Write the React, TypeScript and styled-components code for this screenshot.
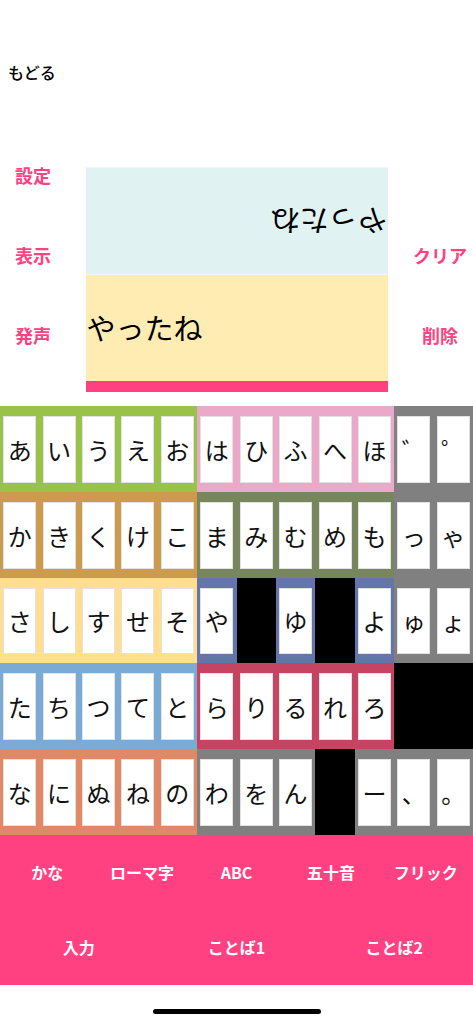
import React from "react";
import styled, { createGlobalStyle } from "styled-components";

const GlobalStyle = createGlobalStyle`
  body {
    margin: 0;
    background-color: #ffffff;
    font-family: "Noto Sans CJK JP", "Noto Sans", sans-serif;
  }
`;

const Page = styled.div`
  width: 473px;
  min-height: 1024px;
  margin: 0 auto;
  display: flex;
  flex-direction: column;
`;

const Header = styled.div`
  height: 135px;
  box-sizing: border-box;
  padding: 62px 0 0 8px;
`;

const BackLink = styled.div`
  font-size: 16px;
  line-height: 20px;
  font-weight: 500;
  color: #000000;
`;

const Middle = styled.div`
  display: grid;
  grid-template-columns: 66px 1fr 66px;
`;

const SideColumn = styled.div`
  display: flex;
  flex-direction: column;
`;

const SideLabel = styled.div`
  height: 80px;
  display: flex;
  align-items: center;
  justify-content: center;
  font-size: 18px;
  font-weight: bold;
  color: #ff4081;
`;

const Display = styled.div`
  width: 302px;
  justify-self: center;
  margin: 33px 0 14px;
  display: flex;
  flex-direction: column;
`;

const Panel = styled.div<{ $flipped?: boolean }>`
  height: 106.5px;
  display: flex;
  align-items: center;
  padding-left: 1px;
  background-color: ${(p) => (p.$flipped ? "#e0f2f1" : "#ffecb3")};
  transform: ${(p) => (p.$flipped ? "rotate(180deg)" : "none")};
`;

const DisplayText = styled.span`
  font-size: 29px;
  line-height: 1;
  color: #000000;
`;

const Bar = styled.div`
  height: 11px;
  background-color: #ff4081;
`;

const Keyboard = styled.div`
  display: grid;
  grid-template-columns: repeat(12, 1fr);
  grid-auto-rows: 85.8px;
`;

const Cell = styled.div<{ $bg: string }>`
  background-color: ${(p) => p.$bg};
  box-sizing: border-box;
  padding: 10px 3.2px 9px;
  display: flex;
`;

const Key = styled.div`
  flex: 1;
  background-color: #ffffff;
  border: 1px solid #e2e2e2;
  display: flex;
  align-items: center;
  justify-content: center;
  font-size: 24px;
  color: #111111;
`;

const ModeBar = styled.div`
  background-color: #ff4081;
  display: flex;
  flex-direction: column;
`;

const ModeRow = styled.div<{ $cols: number }>`
  height: 75px;
  display: grid;
  grid-template-columns: repeat(${(p) => p.$cols}, 1fr);
`;

const ModeButton = styled.div`
  display: flex;
  align-items: center;
  justify-content: center;
  color: #ffffff;
  font-size: 16px;
  font-weight: bold;
`;

const HomeArea = styled.div`
  height: 39px;
  display: flex;
  justify-content: center;
  padding-top: 24px;
  box-sizing: border-box;
`;

const HomeIndicator = styled.div`
  width: 168px;
  height: 5px;
  border-radius: 3px;
  background-color: #000000;
`;

const C = {
  green: "#98c249",
  pink: "#eaa9c9",
  gray: "#808080",
  brown: "#cd9b4e",
  olive: "#78865d",
  yellow: "#ffdf8f",
  slate: "#6375a9",
  sky: "#7aabd7",
  crimson: "#c54462",
  salmon: "#df8967",
  black: "#000000",
};

type KeyDef = [string | null, string];

const group = (chars: string, color: string): KeyDef[] =>
  Array.from(chars).map((ch) => [ch, color]);

const rows: KeyDef[][] = [
  [...group("あいうえお", C.green), ...group("はひふへほ", C.pink), ...group("゛゜", C.gray)],
  [...group("かきくけこ", C.brown), ...group("まみむめも", C.olive), ...group("っゃ", C.gray)],
  [
    ...group("さしすせそ", C.yellow),
    ["や", C.slate],
    [null, C.black],
    ["ゆ", C.slate],
    [null, C.black],
    ["よ", C.slate],
    ...group("ゅょ", C.gray),
  ],
  [...group("たちつてと", C.sky), ...group("らりるれろ", C.crimson), [null, C.black], [null, C.black]],
  [
    ...group("なにぬねの", C.salmon),
    ...group("わをん", C.gray),
    [null, C.black],
    ...group("ー、。", C.gray),
  ],
];

const modesTop = ["かな", "ローマ字", "ABC", "五十音", "フリック"];
const modesBottom = ["入力", "ことば1", "ことば2"];

const App = () => {
  return (
    <Page>
      <GlobalStyle />
      <Header>
        <BackLink>もどる</BackLink>
      </Header>
      <Middle>
        <SideColumn>
          <SideLabel>設定</SideLabel>
          <SideLabel>表示</SideLabel>
          <SideLabel>発声</SideLabel>
        </SideColumn>
        <Display>
          <Panel $flipped>
            <DisplayText>やったね</DisplayText>
          </Panel>
          <Panel>
            <DisplayText>やったね</DisplayText>
          </Panel>
          <Bar />
        </Display>
        <SideColumn>
          <SideLabel />
          <SideLabel>クリア</SideLabel>
          <SideLabel>削除</SideLabel>
        </SideColumn>
      </Middle>
      <Keyboard>
        {rows.map((row, r) =>
          row.map(([ch, color], i) => (
            <Cell key={`${r}-${i}`} $bg={color}>
              {ch && <Key>{ch}</Key>}
            </Cell>
          ))
        )}
      </Keyboard>
      <ModeBar>
        <ModeRow $cols={5}>
          {modesTop.map((m) => (
            <ModeButton key={m}>{m}</ModeButton>
          ))}
        </ModeRow>
        <ModeRow $cols={3}>
          {modesBottom.map((m) => (
            <ModeButton key={m}>{m}</ModeButton>
          ))}
        </ModeRow>
      </ModeBar>
      <HomeArea>
        <HomeIndicator />
      </HomeArea>
    </Page>
  );
};

export default App;
